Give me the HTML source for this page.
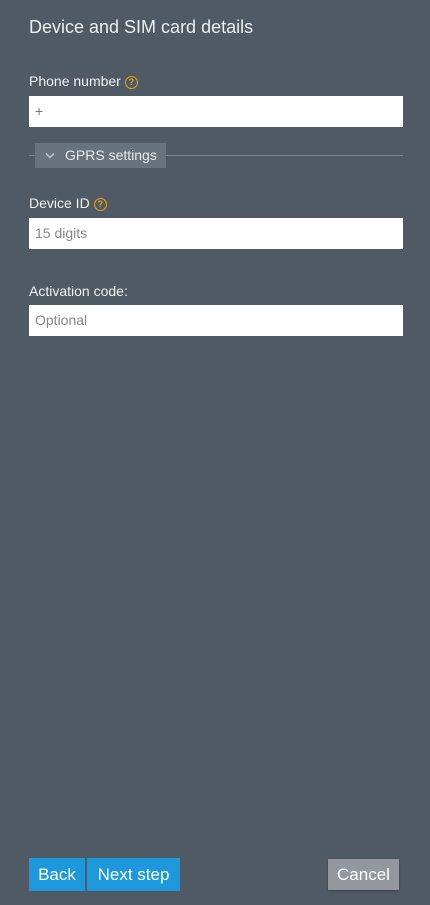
<!DOCTYPE html>
<html><head><style>
body{margin:0;width:430px;height:905px;background:#505a64;font-family:"Liberation Sans",sans-serif;position:relative;overflow:hidden;color:#eef0f2}
.a{position:absolute}
h1{position:absolute;left:29px;top:17px;margin:0;font-weight:normal;font-size:18px;color:#eceef0}
.lbl{position:absolute;left:29px;font-size:14px;color:#f2f3f4}
.q{display:inline-block;width:11px;height:11px;border:1.5px solid #f0a010;border-radius:50%;color:#f0a010;font-size:9px;line-height:11px;text-align:center;margin-left:4px;vertical-align:1px;font-weight:bold}
.in{position:absolute;left:29px;width:374px;height:31px;background:#fff;font-size:14px;color:#777;line-height:31px;box-sizing:border-box;padding-left:6px}
.btn{position:absolute;color:#fff;font-size:17px;text-align:center;line-height:33px;height:33px;background:#1e98dc}
</style></head><body>
<h1>Device and SIM card details</h1>
<div class="lbl" style="top:73px">Phone number<span class="q">?</span></div>
<div class="in" style="top:96px">+</div>
<div class="a" style="left:29px;top:155px;width:374px;height:1px;background:#7c858e"></div>
<div class="a" style="left:35px;top:143px;width:131px;height:25px;background:#68737e;font-size:14px;line-height:25px;color:#e8eaec"><svg style="position:absolute;left:10px;top:9px" width="10" height="7" viewBox="0 0 10 7"><path d="M1 1.5L5 5.5L9 1.5" fill="none" stroke="#b8c0c8" stroke-width="1.6"/></svg><span style="position:absolute;left:30px">GPRS settings</span></div>
<div class="lbl" style="top:195px">Device ID<span class="q">?</span></div>
<div class="in" style="top:218px;color:#888">15 digits</div>
<div class="lbl" style="top:283px">Activation code:</div>
<div class="in" style="top:305px;color:#888">Optional</div>
<div class="btn" style="left:29px;top:858px;width:56px">Back</div>
<div class="btn" style="left:87px;top:858px;width:93px">Next step</div>
<div class="btn" style="left:328px;top:859px;width:71px;height:31px;line-height:31px;background:#9397a0;box-shadow:0 1px 2px rgba(0,0,0,.3)">Cancel</div>
</body></html>
